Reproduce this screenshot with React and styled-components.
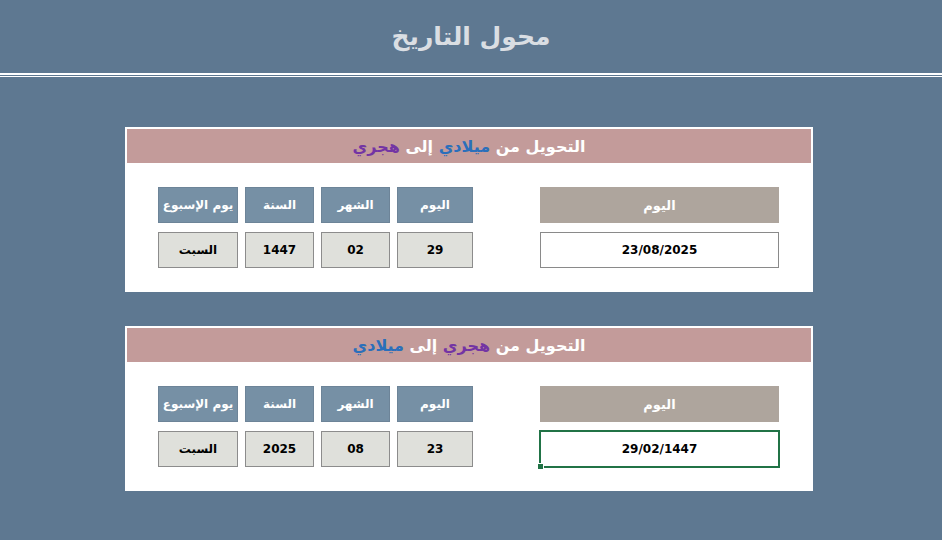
import React from "react";
import styled, { createGlobalStyle } from "styled-components";

const GlobalStyle = createGlobalStyle`
  html, body {
    margin: 0;
    padding: 0;
    background: #5e7891;
  }
  body {
    font-family: "DejaVu Sans", "Noto Sans", sans-serif;
    min-height: 540px;
  }
`;

const Page = styled.div`
  width: 942px;
  min-height: 540px;
  background: #5e7891;
`;

const TitleBar = styled.header`
  height: 73px;
  display: flex;
  align-items: center;
  justify-content: center;
  direction: rtl;
  color: #dadee3;
  font-size: 25px;
  font-weight: 700;
`;

const Rule = styled.div`
  height: 1px;
  border-top: 2px solid #ffffff;
  border-bottom: 1px solid #ffffff;
`;

const Cards = styled.main`
  display: flex;
  flex-direction: column;
  gap: 34px;
  padding: 50px 0 0 125px;
`;

const Card = styled.section`
  width: 688px;
  box-sizing: border-box;
  padding: 2px;
  background: #ffffff;
`;

const CardHeader = styled.h2`
  margin: 0;
  height: 34px;
  display: flex;
  align-items: center;
  justify-content: center;
  direction: rtl;
  background: #c39b9a;
  color: #ffffff;
  font-size: 16px;
  font-weight: 700;
  white-space: pre;
`;

const Accent = styled.span`
  color: ${(p) => (p.$tone === "blue" ? "#2a6fbb" : "#7334a4")};
`;

const CardBody = styled.div`
  display: flex;
  justify-content: space-between;
  padding: 24px 32px 22px 31px;
`;

const Fields = styled.div`
  display: grid;
  grid-template-columns: 80px 69px 69px 76px;
  grid-auto-rows: 36px;
  column-gap: 7px;
  row-gap: 9px;
`;

const Cell = styled.div`
  box-sizing: border-box;
  display: flex;
  align-items: center;
  justify-content: center;
  direction: rtl;
  border: 1px solid ${(p) => (p.$head ? "#6d8498" : "#8c8c8c")};
  background: ${(p) => (p.$head ? "#7690a5" : "#dfe0db")};
  color: ${(p) => (p.$head ? "#ffffff" : "#000000")};
  font-size: ${(p) => (p.$head ? "12px" : "12px")};
  font-weight: 700;
  white-space: nowrap;
  overflow: hidden;
`;

const DateColumn = styled.div`
  display: grid;
  grid-template-columns: 239px;
  grid-auto-rows: 36px;
  row-gap: 9px;
`;

const DateLabel = styled.div`
  display: flex;
  align-items: center;
  justify-content: center;
  background: #aea59d;
  color: #ffffff;
  font-size: 13px;
  font-weight: 700;
`;

const DateInput = styled.div`
  position: relative;
  box-sizing: border-box;
  display: flex;
  align-items: center;
  justify-content: center;
  background: #ffffff;
  border: ${(p) => (p.$active ? "2px solid #217346" : "1px solid #8a8a8a")};
  margin: ${(p) => (p.$active ? "-1px -1px 0 -1px" : "0")};
  height: ${(p) => (p.$active ? "38px" : "36px")};
  color: #000000;
  font-size: 12px;
  font-weight: 700;
`;

/* Excel-style fill handle on the selected cell */
const FillHandle = styled.span`
  position: absolute;
  left: -4px;
  bottom: -4px;
  width: 5px;
  height: 5px;
  background: #217346;
  border: 1px solid #ffffff;
`;

const heads = ["يوم الإسبوع", "السنة", "الشهر", "اليوم"];

function Converter({ from, to, fromTone, toTone, values, date, active }) {
  return (
    <Card>
      <CardHeader>
        {"التحويل من "}
        <Accent $tone={fromTone}>{from}</Accent>
        {" إلى "}
        <Accent $tone={toTone}>{to}</Accent>
      </CardHeader>
      <CardBody>
        <Fields>
          {heads.map((h) => (
            <Cell $head key={h}>
              {h}
            </Cell>
          ))}
          {values.map((v, i) => (
            <Cell key={i}>{v}</Cell>
          ))}
        </Fields>
        <DateColumn>
          <DateLabel>اليوم</DateLabel>
          <DateInput $active={active}>
            {date}
            {active && <FillHandle />}
          </DateInput>
        </DateColumn>
      </CardBody>
    </Card>
  );
}

export default function App() {
  return (
    <Page>
      <GlobalStyle />
      <TitleBar>محول التاريخ</TitleBar>
      <Rule />
      <Cards>
        <Converter
          from="ميلادي"
          to="هجري"
          fromTone="blue"
          toTone="purple"
          values={["السبت", "1447", "02", "29"]}
          date="23/08/2025"
        />
        <Converter
          from="هجري"
          to="ميلادي"
          fromTone="purple"
          toTone="blue"
          values={["السبت", "2025", "08", "23"]}
          date="29/02/1447"
          active
        />
      </Cards>
    </Page>
  );
}
